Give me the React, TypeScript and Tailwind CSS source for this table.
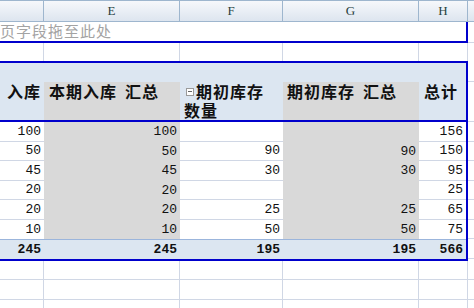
import React from "react";

// Excel pivot table fragment: columns D (cut off) to I (cut off).
const W = { d: 44, e: 136, f: 103, g: 136, h: 47 };
const GRID = "border-[#d0d7e5]";
const num = "font-['Liberation_Mono',monospace] text-[13px] text-[#111]";
const cjk = "font-['Noto_Sans_CJK_SC',sans-serif]";

const rows: (number | null)[][] = [
  [100, 100, null, null, 156],
  [50, 50, 90, 90, 150],
  [45, 45, 30, 30, 95],
  [20, 20, null, null, 25],
  [20, 20, 25, 25, 65],
  [10, 10, 50, 50, 75],
];
const heights = [20, 19, 20, 19, 20, 19];

function ColHead({ w, label }: { w: number; label: string }) {
  return (
    <div
      style={{ width: w }}
      className="flex shrink-0 items-center justify-center border-r border-[#9eb6ce] font-['Liberation_Serif',serif] text-[13px] text-[#27413e]"
    >
      {label}
    </div>
  );
}

function Cell({ w, v, gray, h, last }: { w: number; v: number | null; gray?: boolean; h: number; last?: boolean }) {
  return (
    <div
      style={{ width: w, height: h }}
      className={`flex shrink-0 items-center justify-end pr-[3px] ${num} ${
        gray ? "bg-[#d9d9d9]" : `bg-white ${last ? "" : "border-b"} ${GRID}`
      }`}
    >
      {v ?? ""}
    </div>
  );
}

function EmptyRow({ h, bottom = true }: { h: number; bottom?: boolean }) {
  const cls = `shrink-0 border-r ${GRID} ${bottom ? "border-b" : ""}`;
  return (
    <div className="flex" style={{ height: h }}>
      <div style={{ width: 44 }} className={cls} />
      <div style={{ width: 136 }} className={cls} />
      <div style={{ width: 103 }} className={cls} />
      <div style={{ width: 136 }} className={cls} />
      <div style={{ width: 49 }} className={cls} />
      <div className={`flex-1 ${bottom ? "border-b" : ""} ${GRID}`} />
    </div>
  );
}

export default function App() {
  return (
    <div className="h-[308px] w-[474px] overflow-hidden bg-white">
      {/* column letters */}
      <div className="flex h-[22px] border-y border-[#9eb6ce] bg-gradient-to-b from-[#f6f8fb] to-[#dde5ef]">
        <ColHead w={44} label="" />
        <ColHead w={136} label="E" />
        <ColHead w={103} label="F" />
        <ColHead w={136} label="G" />
        <ColHead w={49} label="H" />
        <div className="flex-1" />
      </div>

      {/* page field drop zone */}
      <div className="flex h-[21px]">
        <div className="flex w-[468px] shrink-0 items-center border-r-2 border-b-2 border-[#0000cc]">
          <span className={`${cjk} whitespace-nowrap text-[15px] tracking-[1px] text-[#a3a3a3]`}>
            页字段拖至此处
          </span>
        </div>
        <div className={`flex-1 border-b ${GRID}`} />
      </div>

      <EmptyRow h={18} bottom={false} />

      {/* pivot body */}
      <div className="flex">
        <div className="w-[468px] shrink-0 border-y-2 border-r-2 border-[#0000cc]">
          <div className="flex h-[19px] bg-[#dce6f1]" />
          <div className={`flex h-[38px] bg-[#dce6f1] ${cjk} text-[16px] font-bold leading-[19px] tracking-[1px] text-[#111]`}>
            <div style={{ width: W.d }} className="flex shrink-0 justify-end pr-[3px] whitespace-nowrap">
              入库
            </div>
            <div style={{ width: W.e }} className="flex shrink-0 gap-[8px] bg-[#d9d9d9] pl-[5px] whitespace-nowrap">
              <span>本期入库</span>
              <span>汇总</span>
            </div>
            <div style={{ width: W.f }} className="shrink-0 pl-[4px]">
              <div className="flex items-center whitespace-nowrap">
                <span className="mx-[2px] flex h-[8px] w-[8px] items-center justify-center border border-[#9a9a9a] bg-white">
                  <span className="h-px w-[4px] bg-[#666]" />
                </span>
                期初库存
              </div>
              <div>数量</div>
            </div>
            <div style={{ width: W.g }} className="flex shrink-0 gap-[8px] bg-[#d9d9d9] pl-[4px] whitespace-nowrap">
              <span>期初库存</span>
              <span>汇总</span>
            </div>
            <div style={{ width: W.h }} className="shrink-0 pl-[5px] whitespace-nowrap">
              总计
            </div>
          </div>
          <div className="border-t-2 border-[#0000cc]">
            {rows.map((r, i) => (
              <div key={i} className="flex">
                <Cell w={W.d} v={r[0]} h={heights[i]} last={i === rows.length - 1} />
                <Cell w={W.e} v={r[1]} gray h={heights[i]} />
                <Cell w={W.f} v={r[2]} h={heights[i]} last={i === rows.length - 1} />
                <Cell w={W.g} v={r[3]} gray h={heights[i]} />
                <Cell w={W.h} v={r[4]} h={heights[i]} last={i === rows.length - 1} />
              </div>
            ))}
            <div className={`flex h-[20px] border-t border-[#9bb5dc] bg-[#dce6f1] ${num} font-bold`}>
              <div style={{ width: W.d }} className="flex shrink-0 items-center justify-end pr-[3px]">245</div>
              <div style={{ width: W.e }} className="flex shrink-0 items-center justify-end pr-[3px]">245</div>
              <div style={{ width: W.f }} className="flex shrink-0 items-center justify-end pr-[3px]">195</div>
              <div style={{ width: W.g }} className="flex shrink-0 items-center justify-end pr-[3px]">195</div>
              <div style={{ width: W.h }} className="flex shrink-0 items-center justify-end pr-[3px]">566</div>
            </div>
          </div>
        </div>
        <div className="flex flex-1 flex-col">
          {[21, 40, 20, 19, 20, 19, 20, 19, 20].map((h, i) => (
            <div key={i} style={{ height: h }} className={`shrink-0 border-b ${GRID}`} />
          ))}
        </div>
      </div>

      <EmptyRow h={19} />
      <EmptyRow h={20} />
      <EmptyRow h={10} bottom={false} />
    </div>
  );
}
